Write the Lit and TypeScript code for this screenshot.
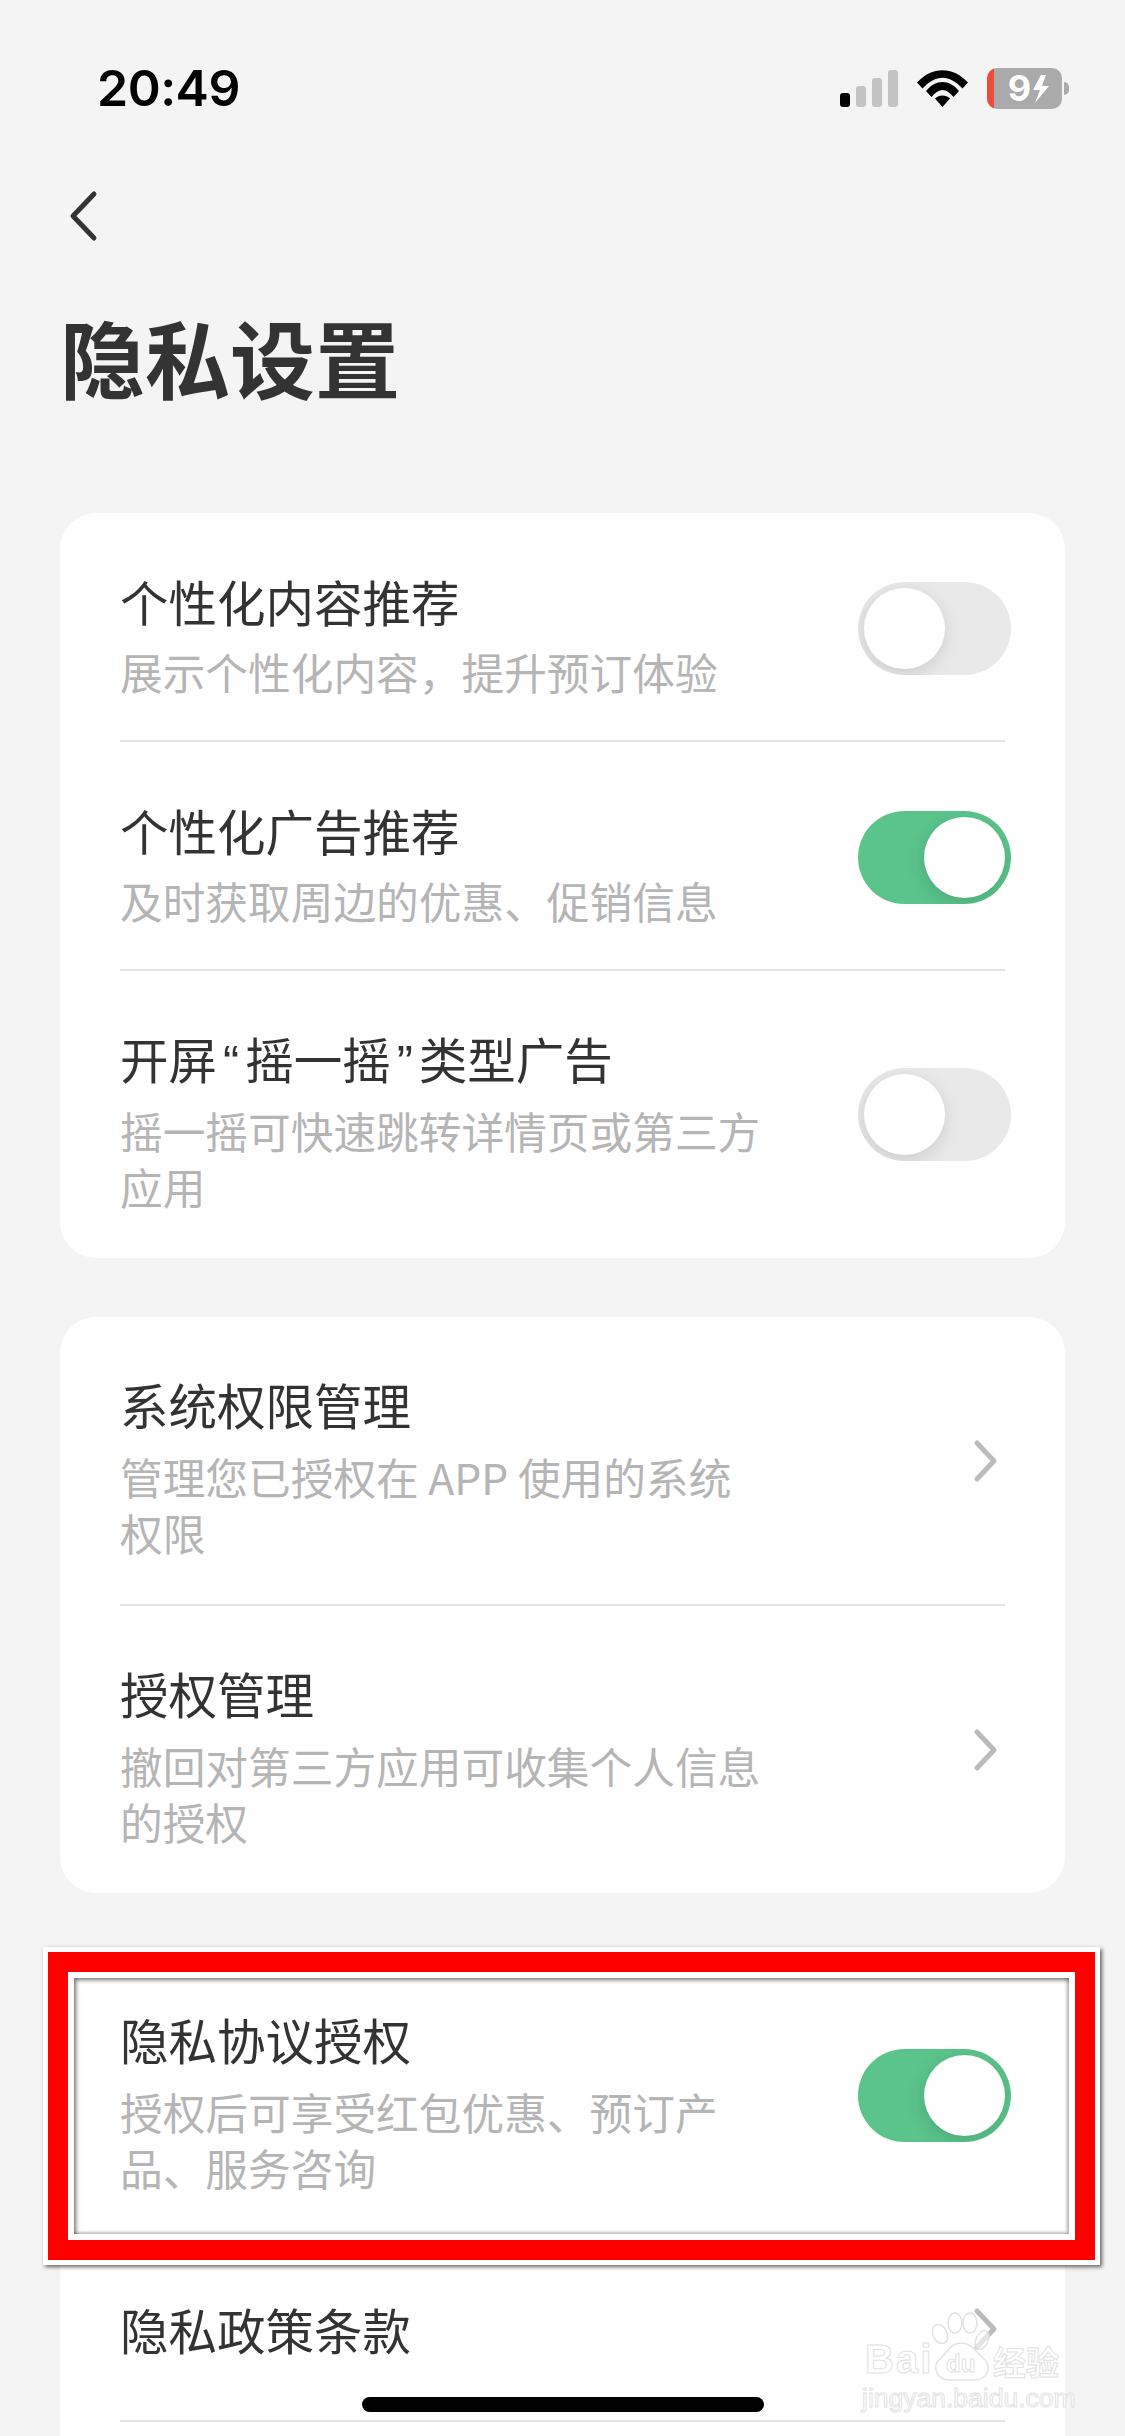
import { LitElement, html, css, nothing } from "lit";
import { customElement } from "lit/decorators.js";

type Row = { title: string; sub?: string[]; ctl: "on" | "off" | "go" };

const CARDS: Row[][] = [
  [
    { title: "个性化内容推荐", sub: ["展示个性化内容，提升预订体验"], ctl: "off" },
    { title: "个性化广告推荐", sub: ["及时获取周边的优惠、促销信息"], ctl: "on" },
    { title: "开屏“摇一摇”类型广告", sub: ["摇一摇可快速跳转详情页或第三方", "应用"], ctl: "off" },
  ],
  [
    { title: "系统权限管理", sub: ["管理您已授权在 APP 使用的系统", "权限"], ctl: "go" },
    { title: "授权管理", sub: ["撤回对第三方应用可收集个人信息", "的授权"], ctl: "go" },
  ],
  [
    { title: "隐私协议授权", sub: ["授权后可享受红包优惠、预订产", "品、服务咨询"], ctl: "on" },
    { title: "隐私政策条款", ctl: "go" },
    { title: "", ctl: "go" },
  ],
];

@customElement("app-root")
export class AppRoot extends LitElement {
  static styles = css`
    :host {
      display: block;
      position: relative;
      width: 1125px;
      height: 2436px;
      overflow: hidden;
      background: #f4f4f4;
      color: #333;
      font-family: "Noto Sans CJK SC", "Noto Sans", sans-serif;
    }
    .status {
      display: flex;
      justify-content: space-between;
      align-items: center;
      height: 41px;
      padding: 68px 56px 0 97px;
    }
    .time {
      font: 600 50px/41px Inter, "Liberation Sans", sans-serif;
      color: #000;
      letter-spacing: -0.5px;
    }
    .icons { display: flex; align-items: center; }
    .signal { display: flex; align-items: flex-end; gap: 6px; height: 37px; margin-right: 19px; }
    .signal i { display: block; width: 10px; border-radius: 3px; background: #c4c4c4; }
    .signal i:nth-child(1) { height: 14px; background: #000; }
    .signal i:nth-child(2) { height: 21px; }
    .signal i:nth-child(3) { height: 29px; }
    .signal i:nth-child(4) { height: 37px; }
    .wifi { display: block; width: 51px; height: 37px; margin-right: 19px; }
    .battery {
      display: flex;
      align-items: center;
      justify-content: center;
      gap: 2px;
      box-sizing: border-box;
      width: 75px;
      height: 41px;
      padding-left: 8px;
      border-radius: 10px;
      color: #fff;
      background: linear-gradient(90deg, #ec4e3a 7px, #aaa 7px);
      font: 700 36px/41px Inter, sans-serif;
    }
    .bolt { display: block; width: 16px; height: 28px; }
    .nub { width: 5px; height: 13px; margin-left: 2px; background: #aaa; border-radius: 0 6px 6px 0; }
    .back { display: block; width: 30px; height: 52px; margin: 81px 0 0 68px; }
    h1 {
      margin: 72px 0 115px 60px;
      font-size: 85px;
      line-height: 84px;
      font-weight: 700;
      color: #333;
    }
    .cards { display: flex; flex-direction: column; gap: 59px; padding: 0 60px; }
    .card { background: #fff; border-radius: 36px; overflow: hidden; padding: 0 60px; }
    .row {
      display: flex;
      align-items: center;
      justify-content: space-between;
      padding: 58px 0 41px;
      border-bottom: 2px solid #e4e4e4;
    }
    .row:last-child { border-bottom: 0; }
    .row.plain { padding-bottom: 61px; }
    .row.two { padding: 57px 0 44px; }
    .title { min-height: 60px; font-size: 48.5px; line-height: 60px; font-weight: 400; color: #333; }
    .q { font-family: "Liberation Sans", sans-serif; line-height: 1; padding: 0 6px; }
    .sub { margin-top: 12px; font-size: 42.7px; line-height: 56px; color: #b5b5b5; white-space: nowrap; }
    .row.two .sub { margin-top: 14px; }
    .toggle {
      position: relative;
      flex: none;
      width: 153px;
      height: 93px;
      margin: -13px -6px 0 0;
      border-radius: 47px;
      overflow: hidden;
      background: #e9e9e9;
    }
    .toggle.on { background: #5ac48b; }
    .knob {
      position: absolute;
      top: 6px;
      left: 6px;
      width: 81px;
      height: 81px;
      border-radius: 50%;
      background: #fff;
      box-shadow: -1px 5px 18px rgba(0, 0, 0, 0.13);
    }
    .toggle.on .knob { left: 66px; }
    .chev { display: block; flex: none; width: 26px; height: 44px; margin: -13px 6px 0 0; }
    .row.plain .chev { margin-top: 0; }
    .frame {
      position: absolute;
      left: 43px;
      top: 1947px;
      box-sizing: border-box;
      width: 1057px;
      height: 318px;
      border: 5px solid #fff;
      box-shadow: 2px 2px 4px rgba(0, 0, 0, 0.6);
    }
    .red { height: 100%; box-sizing: border-box; border: 20px solid #f00; }
    .inner {
      height: 100%;
      box-sizing: border-box;
      border: 6px solid #fff;
      box-shadow: inset 2px 2px 4px rgba(0, 0, 0, 0.55), inset -2px -2px 3px rgba(0, 0, 0, 0.2);
    }
    .home {
      position: absolute;
      left: 362px;
      top: 2397px;
      width: 402px;
      height: 15px;
      border-radius: 8px;
      background: #000;
    }
    .mark {
      position: absolute;
      left: 860px;
      top: 2300px;
      width: 210px;
      height: 112px;
      color: rgba(255, 255, 255, 0.8);
      -webkit-text-stroke: 1px #e2e2e2;
    }
    .mark span { position: absolute; white-space: nowrap; }
    .paw { position: absolute; left: 0; top: 0; width: 210px; height: 112px; }
    .bai { left: 5px; top: 39px; font: 700 40px/40px "Liberation Sans", sans-serif; letter-spacing: 2px; }
    .du { left: 86px; top: 52px; font: 700 24px/24px "Liberation Sans", sans-serif; }
    .jy { left: 133px; top: 41px; font: 700 33px/40px "Noto Sans CJK SC", sans-serif; }
    .url { left: 2px; top: 85px; font: 400 26.5px/26px "Liberation Sans", sans-serif; }
  `;

  private titleText(t: string) {
    if (!t.includes("“")) return t;
    const [a, rest] = t.split("“");
    const [b, c] = rest.split("”");
    return html`${a}<span class="q">“</span>${b}<span class="q">”</span>${c}`;
  }

  private control(c: Row["ctl"]) {
    if (c === "on" || c === "off") {
      return html`<div class="toggle ${c}"><div class="knob"></div></div>`;
    }
    return html`<svg class="chev" viewBox="0 0 26 44" fill="none">
      <path d="M4 4 L21 22 L4 40" stroke="#bbb" stroke-width="5" stroke-linecap="round" stroke-linejoin="round" />
    </svg>`;
  }

  private row(r: Row) {
    const kind = !r.sub ? "plain" : r.sub.length > 1 ? "two" : "";
    return html`<div class="row ${kind}">
      <div>
        <div class="title">${this.titleText(r.title)}</div>
        ${r.sub ? html`<div class="sub">${r.sub.map((l, i) => html`${i ? html`<br />` : nothing}${l}`)}</div>` : nothing}
      </div>
      ${r.title ? this.control(r.ctl) : nothing}
    </div>`;
  }

  render() {
    return html`
      <div class="status">
        <div class="time">20:49</div>
        <div class="icons">
          <div class="signal"><i></i><i></i><i></i><i></i></div>
          <svg class="wifi" viewBox="0 0 51 37" fill="#000">
            <path d="M0 12.5 C15 -4 36 -4 51 12.5 L45.5 18.5 C32 4 19 4 5.5 18.5 Z" />
            <path d="M9 21 C19 9 32 9 42 21 L36.5 27 C29 17.7 22 17.7 14.5 27 Z" />
            <path d="M25.5 37 L18 28.5 C22 24.5 29 24.5 33 28.5 Z" />
          </svg>
          <div class="battery">
            9<svg class="bolt" viewBox="0 0 16 28" fill="#fff"><path d="M8 0 L0 15 L7 15 L2 28 L16 11 L9 11 L13 0 Z" /></svg>
          </div>
          <div class="nub"></div>
        </div>
      </div>
      <svg class="back" viewBox="0 0 30 52" fill="none">
        <path d="M26 4 L5 26 L26 48" stroke="#333" stroke-width="5" stroke-linecap="round" stroke-linejoin="round" />
      </svg>
      <h1>隐私设置</h1>
      <div class="cards">
        ${CARDS.map((c) => html`<div class="card">${c.map((r) => this.row(r))}</div>`)}
      </div>
      <div class="home"></div>
      <div class="mark">
        <svg class="paw" viewBox="0 0 210 112" fill="rgba(255,255,255,.6)" stroke="#e2e2e2" stroke-width="1.5">
          <ellipse cx="80" cy="34" rx="7" ry="10" transform="rotate(-25 80 34)" />
          <ellipse cx="95" cy="23" rx="7" ry="10" />
          <ellipse cx="110" cy="23" rx="7" ry="10" />
          <ellipse cx="122" cy="40" rx="6" ry="10" transform="rotate(25 122 40)" />
          <path d="M101 43 C90 43 88 52 81 58 C71 66 76 80 90 80 C98 80 106 80 114 80 C128 80 133 66 122 57 C115 51 112 43 101 43 Z" />
        </svg>
        <span class="bai">Bai</span>
        <span class="du">du</span>
        <span class="jy">经验</span>
        <span class="url">jingyan.baidu.com</span>
      </div>
      <div class="frame"><div class="red"><div class="inner"></div></div></div>
    `;
  }
}
